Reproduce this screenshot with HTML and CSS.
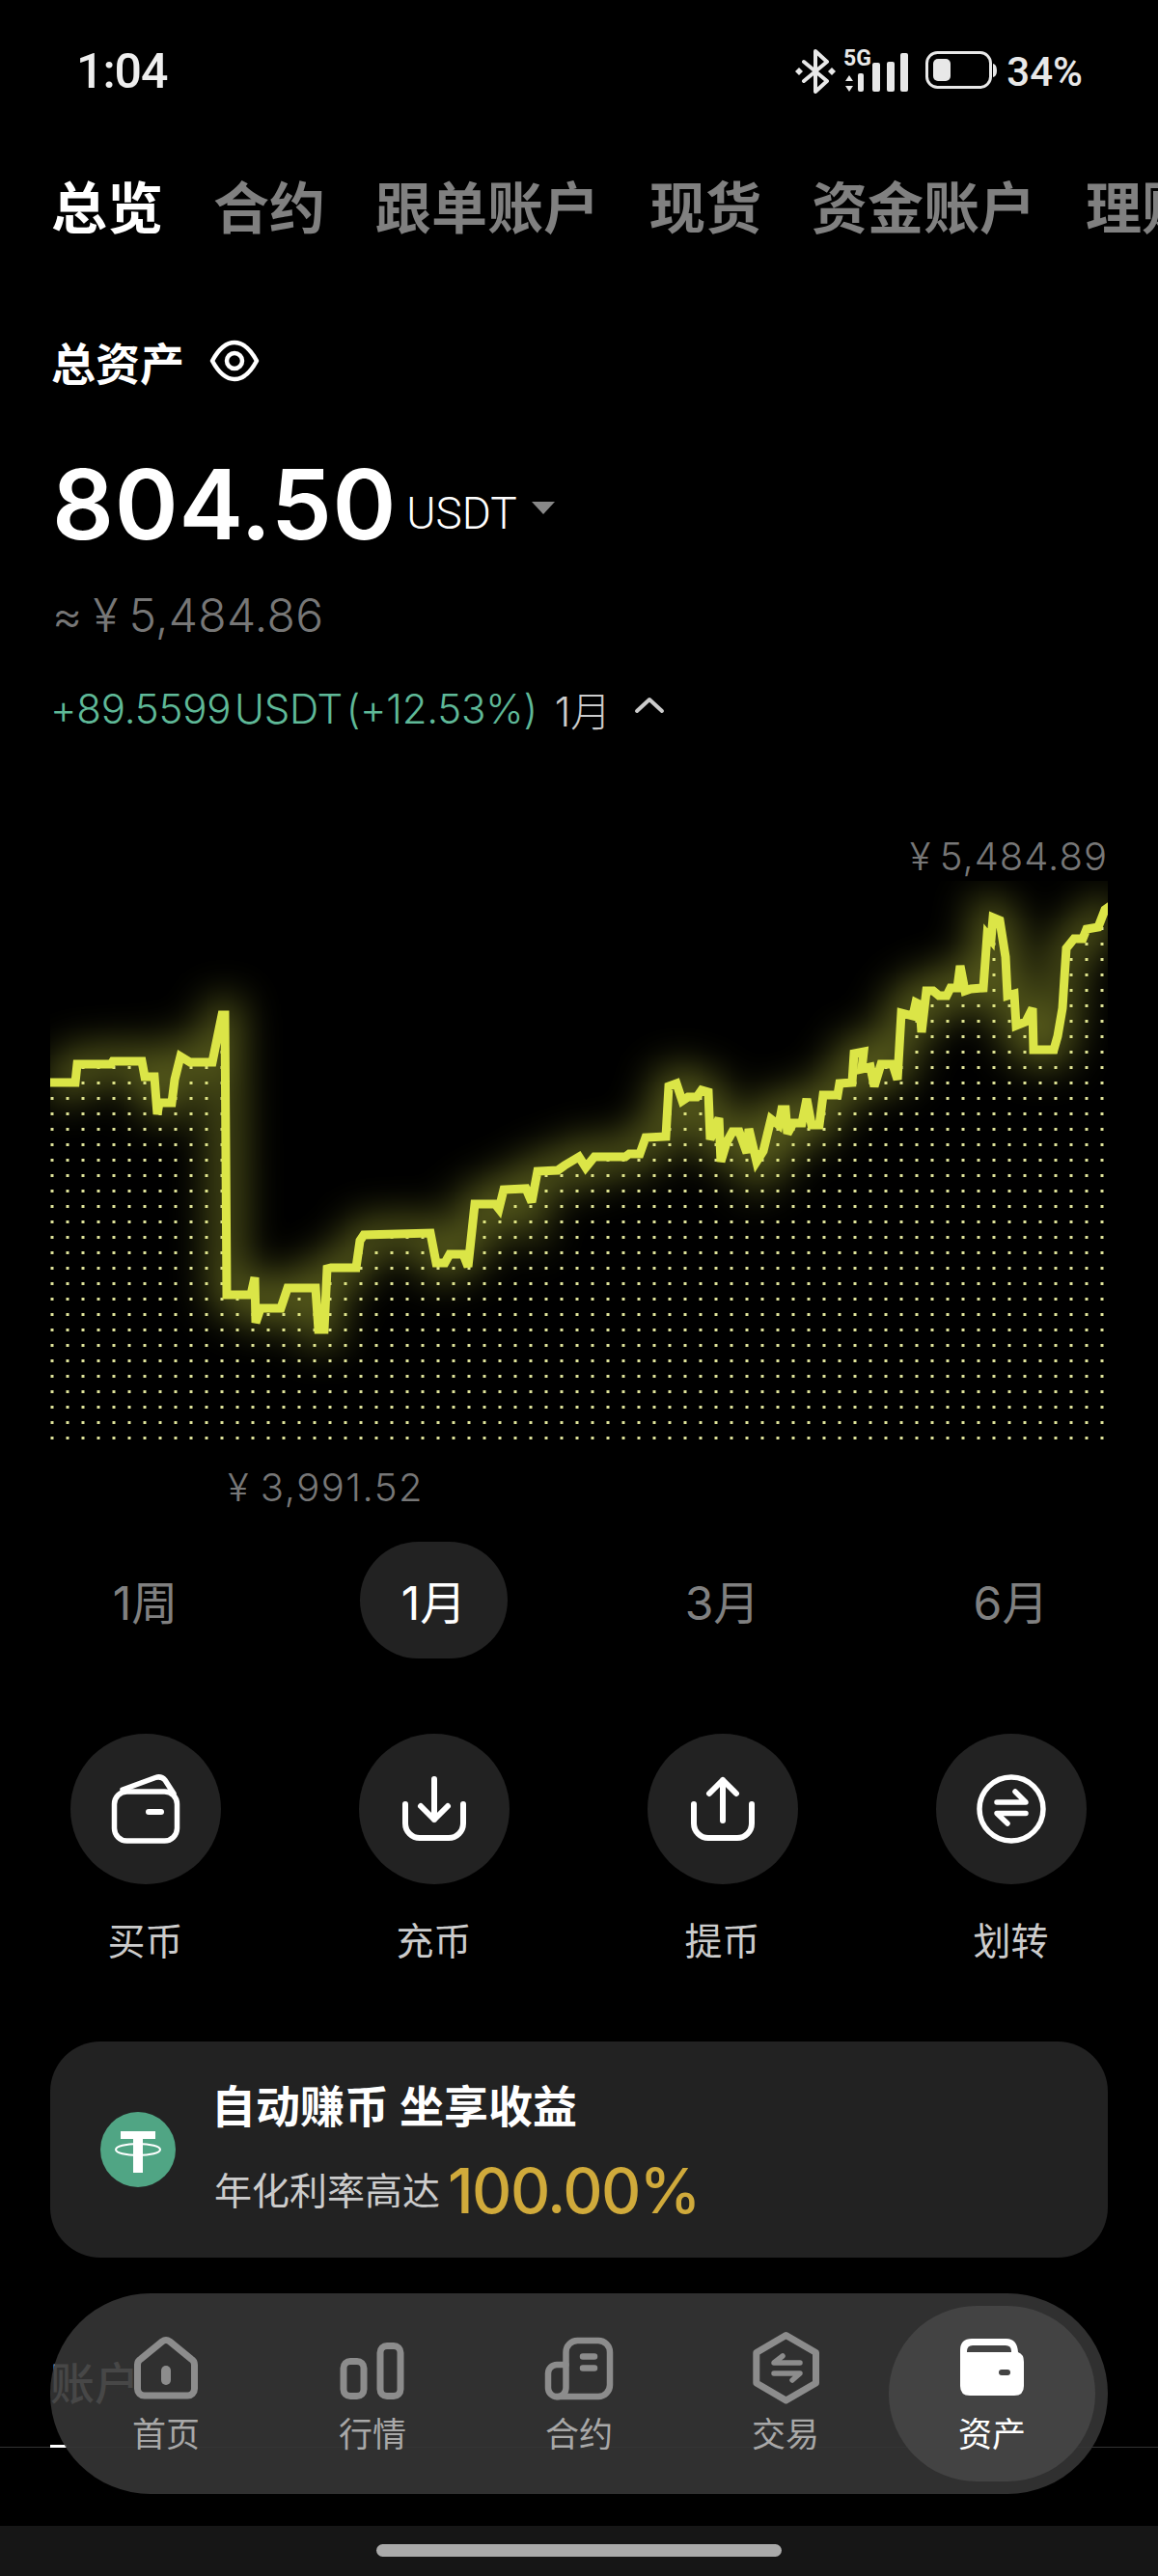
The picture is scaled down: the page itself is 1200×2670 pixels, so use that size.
FILE: index.html
```html
<!DOCTYPE html>
<html lang="zh-CN">
<head>
    <meta charset="UTF-8">
    <meta name="viewport" content="width=device-width, initial-scale=1.0">
    <title>总览</title>
    <link rel="stylesheet" href="styles.css">
</head>
<body>
    <!-- Status bar -->
    <div class="status">
        <span class="status-time">1:04</span>
        <div class="status-icons">
            <svg class="icon-bt" width="42" height="46" viewBox="0 0 42 46">
                <path d="M9 13 L33 33 L21 44 V2 L33 13 L9 33" class="line-light" stroke-width="4"/>
                <path d="M4 19 l4 4 l-4 4 l-4 -4z M38 19 l4 4 l-4 4 l-4 -4z" class="fill-light"/>
            </svg>
            <svg class="icon-signal" width="68" height="54" viewBox="0 -8 68 54">
                <text x="0" y="18" class="signal-text">5G</text>
                <path d="M6 28 l4 6 h-8z M6 45 l4 -6 h-8z" class="fill-light"/>
                <rect x="15" y="26" width="6" height="19" rx="2" class="fill-light"/>
                <rect x="30" y="15" width="8" height="30" rx="2" class="fill-light"/>
                <rect x="45" y="14" width="8" height="31" rx="2" class="fill-light"/>
                <rect x="59" y="5" width="8" height="40" rx="2" class="fill-light"/>
            </svg>
            <svg class="icon-battery" width="74" height="40" viewBox="0 0 74 40">
                <rect x="1.5" y="1.5" width="66" height="36" rx="11" class="line-light" stroke-width="3"/>
                <rect x="8" y="8" width="18" height="23" rx="5" class="fill-light"/>
                <path d="M70 13 q4 1 4 7 t-4 7z" class="fill-light"/>
            </svg>
            <span class="status-battery">34%</span>
        </div>
    </div>

    <!-- Account tabs -->
    <nav class="tabs">
        <a class="tab tab-active">总览</a>
        <a class="tab">合约</a>
        <a class="tab">跟单账户</a>
        <a class="tab">现货</a>
        <a class="tab">资金账户</a>
        <a class="tab">理财账户</a>
    </nav>

    <!-- Balance -->
    <section class="summary">
        <div class="total-label">
            <span>总资产</span>
            <svg width="52" height="44" viewBox="0 0 52 44">
                <path d="M3 22 C10 9 17 3 26 3 S42 9 49 22 C42 35 35 41 26 41 S10 35 3 22z" class="line-white" stroke-width="4.5"/>
                <circle cx="26" cy="22" r="8" class="line-white" stroke-width="4.5"/>
            </svg>
        </div>
        <div class="amount">
            <span class="amount-value">804.50</span>
            <span class="amount-unit">USDT</span>
            <span class="amount-caret"></span>
        </div>
        <div class="fiat">≈ ¥ 5,484.86</div>
        <div class="change">
            <span class="change-value">+89.5599 USDT (+12.53%)</span>
            <span class="change-period">1月</span>
            <svg width="32" height="18" viewBox="0 0 32 18">
                <path d="M3 15 L16 3 L29 15" class="line-soft" stroke-width="4"/>
            </svg>
        </div>
    </section>

    <!-- Chart -->
    <section class="chart">
        <div class="chart-high">¥ 5,484.89</div>
        <svg class="chart-plot" width="1096" height="597" viewBox="52 913 1096 597">
            <defs>
                <pattern id="dots" patternUnits="userSpaceOnUse" x="52" y="0" width="16" height="16">
                    <rect x="0.5" y="1" width="3" height="3" class="chart-dot"/>
                </pattern>
                <clipPath id="below">
                    <polygon points="52,1122 78,1122 80,1103 115,1103 117,1100 147,1100 150,1116 160,1116 163,1155 165,1143 178,1143 181,1119 187,1095 197,1101 220,1101 230,1052 233,1052 235,1342 260,1342 264,1324 265,1371 270,1356 291,1356 298,1335 327,1335 330,1378 336,1378 339,1315 343,1314 369,1314 373,1286 377,1280 446,1278 452,1309 461,1309 466,1300 480,1300 485,1313 492,1248 513,1248 517,1253 522,1233 545,1232 551,1246 557,1214 578,1213 585,1208 600,1199 607,1210 616,1199 648,1199 652,1196 663,1196 669,1179 690,1178 693,1126 701,1123 707,1141 713,1137 722,1137 727,1130 734,1132 736,1181 745,1159 747,1204 753,1184 759,1173 766,1173 774,1195 776,1170 784,1204 791,1193 799,1160 807,1166 810,1150 814,1150 816,1175 822,1164 831,1164 836,1139 841,1166 849,1166 853,1135 868,1135 870,1123 883,1122 885,1092 895,1090 893,1108 902,1106 906,1126 913,1103 925,1103 930,1119 934,1050 946,1053 949,1039 953,1041 955,1070 960,1027 967,1027 973,1032 981,1032 985,1024 992,1024 995,1001 1000,1027 1006,1025 1019,1024 1023,969 1027,974 1029,951 1036,954 1042,992 1044,1032 1051,1030 1053,1063 1063,1059 1070,1045 1071,1088 1092,1088 1096,1074 1101,1045 1105,983 1113,973 1122,973 1126,963 1138,961 1145,943 1148,942 1148,1494 52,1494"/>
                </clipPath>
                <filter id="glow" x="-10%" y="-30%" width="120%" height="160%">
                    <feGaussianBlur stdDeviation="20"/>
                </filter>
                <polyline id="price" points="48,1122 78,1122 80,1103 115,1103 117,1100 147,1100 150,1116 160,1116 163,1155 165,1143 178,1143 181,1119 187,1095 197,1101 220,1101 230,1052 233,1052 235,1342 260,1342 264,1324 265,1371 270,1356 291,1356 298,1335 327,1335 330,1378 336,1378 339,1315 343,1314 369,1314 373,1286 377,1280 446,1278 452,1309 461,1309 466,1300 480,1300 485,1313 492,1248 513,1248 517,1253 522,1233 545,1232 551,1246 557,1214 578,1213 585,1208 600,1199 607,1210 616,1199 648,1199 652,1196 663,1196 669,1179 690,1178 693,1126 701,1123 707,1141 713,1137 722,1137 727,1130 734,1132 736,1181 745,1159 747,1204 753,1184 759,1173 766,1173 774,1195 776,1170 784,1204 791,1193 799,1160 807,1166 810,1150 814,1150 816,1175 822,1164 831,1164 836,1139 841,1166 849,1166 853,1135 868,1135 870,1123 883,1122 885,1092 895,1090 893,1108 902,1106 906,1126 913,1103 925,1103 930,1119 934,1050 946,1053 949,1039 953,1041 955,1070 960,1027 967,1027 973,1032 981,1032 985,1024 992,1024 995,1001 1000,1027 1006,1025 1019,1024 1023,969 1027,974 1029,951 1036,954 1042,992 1044,1032 1051,1030 1053,1063 1063,1059 1070,1045 1071,1088 1092,1088 1096,1074 1101,1045 1105,983 1113,973 1122,973 1126,963 1138,961 1145,943 1152,938"/>
            </defs>
            <rect x="52" y="913" width="1096" height="597" fill="url(#dots)" clip-path="url(#below)"/>
            <use href="#price" class="chart-glow" filter="url(#glow)"/>
            <use href="#price" class="chart-line"/>
        </svg>
        <div class="chart-low">¥ 3,991.52</div>
    </section>

    <!-- Period switch -->
    <div class="periods">
        <a class="period">1周</a>
        <a class="period period-active">1月</a>
        <a class="period">3月</a>
        <a class="period">6月</a>
    </div>

    <!-- Actions -->
    <div class="actions">
        <div class="action">
            <div class="action-circle">
                <svg width="80" height="80" viewBox="0 0 80 80">
                    <rect x="7.5" y="22" width="65" height="51" rx="13" class="line-white" stroke-width="5.5"/>
                    <path d="M16 20 L50 7.5 Q56 5.5 60 10 L69 24" class="line-white" stroke-width="5.5"/>
                    <path d="M43 43 H56" class="line-white" stroke-width="6"/>
                </svg>
            </div>
            <span class="action-label">买币</span>
        </div>
        <div class="action">
            <div class="action-circle">
                <svg width="80" height="80" viewBox="0 0 80 80">
                    <path d="M40 9 V51 M26 37 L40 51 L54 37" class="line-white" stroke-width="6"/>
                    <path d="M10 35 V55 a15 15 0 0 0 15 15 H55 a15 15 0 0 0 15 -15 V35" class="line-white" stroke-width="6"/>
                </svg>
            </div>
            <span class="action-label">充币</span>
        </div>
        <div class="action">
            <div class="action-circle">
                <svg width="80" height="80" viewBox="0 0 80 80">
                    <path d="M40 10 V52 M26 24 L40 10 L54 24" class="line-white" stroke-width="6"/>
                    <path d="M10 35 V55 a15 15 0 0 0 15 15 H55 a15 15 0 0 0 15 -15 V35" class="line-white" stroke-width="6"/>
                </svg>
            </div>
            <span class="action-label">提币</span>
        </div>
        <div class="action">
            <div class="action-circle">
                <svg width="80" height="80" viewBox="0 0 80 80">
                    <circle cx="40" cy="40" r="33" class="line-white" stroke-width="5.5"/>
                    <path d="M25 33 H55 L44 22" class="line-white" stroke-width="5.5"/>
                    <path d="M55 44.5 H25 L36 55" class="line-white" stroke-width="5.5"/>
                </svg>
            </div>
            <span class="action-label">划转</span>
        </div>
    </div>

    <!-- Earn card -->
    <div class="earn">
        <svg class="earn-coin" width="78" height="78" viewBox="0 0 78 78">
            <circle cx="39" cy="39" r="39" class="coin-bg"/>
            <rect x="21" y="20" width="36" height="8" class="fill-white"/>
            <rect x="34" y="20" width="10" height="43" class="fill-white"/>
            <ellipse cx="39" cy="39" rx="23" ry="6" class="coin-ring"/>
        </svg>
        <div class="earn-text">
            <div class="earn-title">自动赚币 坐享收益</div>
            <div class="earn-sub">年化利率高达 <span class="earn-rate">100.00%</span></div>
        </div>
    </div>

    <!-- Next tab row, mostly under the floating nav -->
    <div class="lower-tabs">
        <span class="lower-tab">账户</span>
    </div>

    <!-- Floating nav -->
    <nav class="dock">
        <a class="dock-item">
            <svg width="80" height="80" viewBox="0 0 80 80">
                <path d="M36 11 Q40 8 44 11 L66 29 Q69.500 31 69.500 35 V60 a7 7 0 0 1 -7 7 H17.500 a7 7 0 0 1 -7 -7 V35 Q10.500 31 14 29z" class="line-dim" stroke-width="7"/>
                <rect x="35" y="36" width="10" height="20" rx="5" class="fill-dim"/>
            </svg>
            <span>首页</span>
        </a>
        <a class="dock-item">
            <svg width="80" height="80" viewBox="0 0 80 80">
                <rect x="10" y="31.500" width="21" height="36" rx="7" class="line-dim" stroke-width="7"/>
                <rect x="48" y="15.500" width="21" height="52" rx="7" class="line-dim" stroke-width="7"/>
            </svg>
            <span>行情</span>
        </a>
        <a class="dock-item">
            <svg width="80" height="80" viewBox="0 0 80 80">
                <path d="M26.500 35 V22 a12 12 0 0 1 12 -12 H60 a12 12 0 0 1 12 12 V56 a12 12 0 0 1 -12 12 H17" class="line-dim" stroke-width="6.500"/>
                <path d="M26.500 59 V35 H17 a9 9 0 0 0 -9 9 V59 a9 9 0 0 0 18.500 0z" class="line-dim" stroke-width="6.500"/>
                <path d="M44 26.500 H56 M44 38.500 H56" class="line-dim" stroke-width="6.500"/>
            </svg>
            <span>合约</span>
        </a>
        <a class="dock-item">
            <svg width="80" height="80" viewBox="0 0 80 80">
                <path d="M40.500 4.500 L71.500 22.500 V54 L40.500 72 L9.800 54 V22.500z" class="line-dim" stroke-width="7"/>
                <path d="M55 33 H28 L37 26" class="line-dim" stroke-width="5.500"/>
                <path d="M28 44 H55 L47 51" class="line-dim" stroke-width="5.500"/>
            </svg>
            <span>交易</span>
        </a>
        <a class="dock-item dock-active">
            <svg width="80" height="80" viewBox="0 0 80 80">
                <path d="M7 20 Q7 8 19 8 H55 Q66 8 67 22 Q73 24 73 32 V57 Q73 67 63 67 H17 Q7 67 7 57z" class="fill-white"/>
                <path d="M14 22 V21 Q14 15 20 15 H54 Q60 15 60 21 V22z" class="wallet-cut"/>
                <rect x="47" y="40" width="12" height="6" rx="3" class="wallet-cut"/>
            </svg>
            <span>资产</span>
        </a>
    </nav>

    <!-- Gesture bar -->
    <div class="gesture">
        <div class="gesture-handle"></div>
    </div>
</body>
</html>
```

FILE: styles.css
```css
body {
    margin: 0;
    width: 1200px;
    height: 2670px;
    overflow: hidden;
    position: relative;
    background-color: #000;
    color: #fff;
    font-family: Inter, "Noto Sans CJK SC", sans-serif;
}
a {
    color: inherit;
    text-decoration: none;
}
svg {
    display: block;
    fill: none;
}
.line-white, .line-light, .line-soft, .line-dim {
    fill: none;
    stroke-linecap: round;
    stroke-linejoin: round;
}
.line-white { stroke: #fff; }
.line-light { stroke: #e8e8e8; }
.line-soft { stroke: #ccc; }
.line-dim { stroke: #8c8c8c; }
.fill-white { fill: #fff; }
.fill-light { fill: #e8e8e8; }
.fill-dim { fill: #8c8c8c; }

/* status bar */
.status {
    display: flex;
    justify-content: space-between;
    align-items: center;
    height: 48px;
    padding: 50px 78px 0 79px;
}
.status-time {
    font-family: Roboto, sans-serif;
    font-size: 50px;
    font-weight: 500;
    color: #eee;
    letter-spacing: -1px;
}
.status-icons {
    display: flex;
    align-items: center;
}
.icon-signal {
    margin-left: 8px;
    margin-top: -11px;
}
.icon-battery {
    margin-left: 17px;
    margin-top: -2px;
}
.signal-text {
    font-family: Roboto, sans-serif;
    font-size: 23px;
    font-weight: 700;
    fill: #e8e8e8;
}
.status-battery {
    margin-left: 10px;
    font-family: Roboto, sans-serif;
    font-size: 42px;
    font-weight: 500;
    color: #e8e8e8;
}

/* tabs */
.tabs {
    display: flex;
    gap: 52px;
    margin-top: 83px;
    padding-left: 53px;
    font-size: 58px;
    font-weight: 700;
    line-height: 70px;
    color: #808080;
    white-space: nowrap;
    overflow: hidden;
}
.tab-active {
    color: #fff;
}

/* balance */
.summary {
    padding-left: 54px;
}
.total-label {
    display: flex;
    align-items: center;
    gap: 26px;
    margin-top: 97px;
    height: 52px;
    margin-left: -1px;
    font-size: 46px;
    font-weight: 700;
}
.amount {
    display: flex;
    align-items: center;
    height: 120px;
    margin-top: 63px;
    line-height: 120px;
}
.amount-value {
    font-size: 100px;
    font-weight: 600;
    letter-spacing: 0.7px;
}
.amount-unit {
    margin-left: 10px;
    margin-top: 18px;
    font-family: Roboto, sans-serif;
    font-size: 46px;
    font-weight: 300;
}
.amount-caret {
    width: 0;
    height: 0;
    margin-left: 15px;
    border-left: 12px solid transparent;
    border-right: 12px solid transparent;
    border-top: 13px solid #888;
    margin-top: 6px;
}
.fiat {
    margin-top: 25px;
    font-size: 48px;
    font-weight: 300;
    line-height: 60px;
    color: #777;
    letter-spacing: 0.3px;
    word-spacing: -3px;
}
.change {
    display: flex;
    align-items: center;
    margin-top: 41px;
    margin-left: -2px;
    height: 50px;
    font-size: 42px;
    font-weight: 300;
}
.change-value {
    color: #5fb998;
    letter-spacing: -0.2px;
    word-spacing: -8px;
}
.change-period {
    margin-left: 18px;
    font-size: 42px;
    color: #ccc;
}
.change .change-period + svg {
    margin-left: 24px;
    margin-top: -6px;
}

/* chart */
.chart-high {
    margin-top: 104px;
    padding-right: 52px;
    text-align: right;
    font-size: 40px;
    font-weight: 300;
    line-height: 50px;
    color: #777;
    letter-spacing: 1px;
    word-spacing: -4px;
}
.chart-plot {
    margin-left: 52px;
}
.chart-dot {
    fill: #dfe39a;
}
.chart-line {
    fill: none;
    stroke: #dbe547;
    stroke-width: 9;
    stroke-linejoin: miter;
    stroke-miterlimit: 3;
}
.chart-glow {
    fill: none;
    stroke: #dbe547;
    stroke-width: 34;
    opacity: 0.4;
}
.chart-low {
    margin: 7px 0 0 236px;
    font-size: 40px;
    font-weight: 300;
    line-height: 50px;
    color: #777;
    letter-spacing: 1.5px;
    word-spacing: -2px;
}

/* periods and actions share one four column grid */
.periods, .actions {
    display: grid;
    grid-template-columns: repeat(4, 1fr);
    padding: 0 3px 0 1px;
    justify-items: center;
}
.periods {
    margin-top: 31px;
}
.period {
    width: 153px;
    height: 121px;
    border-radius: 61px;
    font-size: 48px;
    font-weight: 400;
    line-height: 128px;
    text-align: center;
    color: #808080;
}
.period-active {
    background-color: #222;
    color: #fff;
}
.actions {
    margin-top: 78px;
}
.action {
    display: flex;
    flex-direction: column;
    align-items: center;
}
.action-circle {
    display: flex;
    align-items: center;
    justify-content: center;
    width: 156px;
    height: 156px;
    border-radius: 50%;
    background-color: #222;
}
.action-label {
    margin-top: 37px;
    font-size: 39px;
    line-height: 44px;
    color: #ccc;
}

/* earn card */
.earn {
    display: flex;
    align-items: center;
    gap: 40px;
    height: 224px;
    margin: 82px 52px 0;
    padding-left: 52px;
    box-sizing: border-box;
    border-radius: 52px;
    background-color: #222;
}
.coin-bg { fill: #50a584; }
.coin-ring {
    fill: none;
    stroke: #fff;
    stroke-width: 2;
}
.earn-title {
    margin-left: -3px;
    font-size: 46px;
    font-weight: 700;
    line-height: 60px;
}
.earn-sub {
    display: flex;
    align-items: center;
    gap: 8px;
    margin-top: 25px;
    font-size: 39px;
    line-height: 66px;
    color: #ccc;
}
.earn-rate {
    font-size: 64px;
    font-weight: 500;
    color: #d0aa3b;
    letter-spacing: -1.5px;
}

/* row behind the dock */
.lower-tabs {
    position: relative;
    height: 96px;
    margin-top: 100px;
    padding-left: 52px;
    border-bottom: 1px solid #333;
}
.lower-tab {
    display: block;
    width: 92px;
    overflow: hidden;
    font-size: 46px;
    font-weight: 500;
    line-height: 60px;
    color: #ccc;
    white-space: nowrap;
}
.lower-tabs::after {
    content: "";
    position: absolute;
    left: 52px;
    bottom: -1px;
    width: 17px;
    height: 3px;
    background-color: #fff;
}

/* floating nav */
.dock {
    position: absolute;
    left: 52px;
    top: 2377px;
    display: grid;
    grid-template-columns: repeat(5, 1fr);
    width: 1096px;
    height: 208px;
    padding: 13px;
    box-sizing: border-box;
    border-radius: 104px;
    background-color: rgba(54, 54, 54, 0.89);
}
.dock-item {
    display: flex;
    flex-direction: column;
    align-items: center;
    padding-top: 26px;
    border-radius: 91px;
    font-size: 35px;
    line-height: 44px;
    color: #a8a8a8;
}
.dock-item span {
    margin-top: 5px;
}
.dock-active {
    background-color: #434343;
    color: #fff;
}
.wallet-cut { fill: #434343; }

/* gesture bar */
.gesture {
    position: absolute;
    left: 0;
    bottom: 0;
    display: flex;
    justify-content: center;
    width: 1200px;
    height: 52px;
    padding-top: 19px;
    box-sizing: border-box;
    background-color: #161616;
}
.gesture-handle {
    width: 420px;
    height: 13px;
    border-radius: 7px;
    background-color: #aaa;
}
```
